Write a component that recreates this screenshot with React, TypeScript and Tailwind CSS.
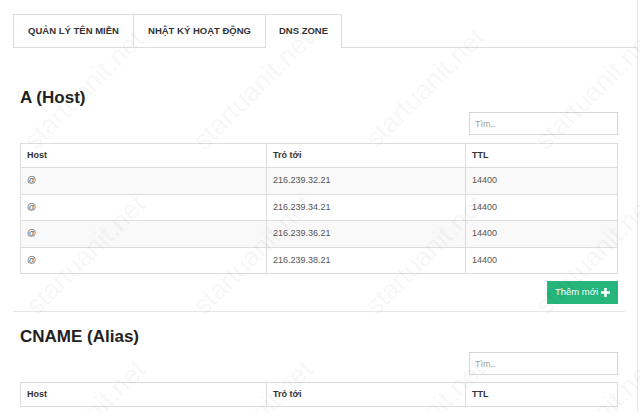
const tabs = [
  { label: 'QUẢN LÝ TÊN MIỀN', width: 'w-[120px]', active: false },
  { label: 'NHẬT KÝ HOẠT ĐỘNG', width: 'w-[132px]', active: false },
  { label: 'DNS ZONE', width: 'w-[77px]', active: true },
]

const aRecords = [
  { host: '@', target: '216.239.32.21', ttl: '14400' },
  { host: '@', target: '216.239.34.21', ttl: '14400' },
  { host: '@', target: '216.239.36.21', ttl: '14400' },
  { host: '@', target: '216.239.38.21', ttl: '14400' },
]

const marks = [
  [84, 90], [253, 90], [425, 88], [595, 90],
  [86, 255], [253, 255], [425, 255], [595, 255],
  [86, 420], [253, 420], [425, 420], [595, 420],
]

function SearchBox() {
  return (
    <div className="flex justify-end">
      <input
        placeholder="Tìm.."
        className="h-[23px] w-[149px] border border-[#d6d6d6] px-[5px] text-[9px] text-[#555] outline-none placeholder:text-[#a0a0a0]"
      />
    </div>
  )
}

function RecordTable({ rows }: { rows: typeof aRecords }) {
  return (
    <table className="w-full table-fixed border-collapse border border-[#ddd] text-[9px]">
      <colgroup>
        <col className="w-[246px]" />
        <col className="w-[199px]" />
        <col />
      </colgroup>
      <thead>
        <tr className="h-[24px]">
          <th className="border border-[#ddd] px-[6px] text-left font-bold text-[#333]">Host</th>
          <th className="border border-[#ddd] px-[6px] text-left font-bold text-[#333]">Trỏ tới</th>
          <th className="border border-[#ddd] px-[6px] text-left font-bold text-[#333]">TTL</th>
        </tr>
      </thead>
      <tbody>
        {rows.map((r, i) => (
          <tr key={i} className={i % 2 === 0 ? 'h-[26.5px] bg-[#f9f9f9]' : 'h-[26.5px] bg-white'}>
            <td className="border border-[#ddd] px-[6px] text-[#555]">{r.host}</td>
            <td className="border border-[#ddd] px-[6px] text-[#555]">{r.target}</td>
            <td className="border border-[#ddd] px-[6px] text-[#555]">{r.ttl}</td>
          </tr>
        ))}
      </tbody>
    </table>
  )
}

export default function App() {
  return (
    <div className="relative h-[412px] w-[640px] overflow-hidden bg-white font-['Liberation_Sans',Arial,sans-serif]">
      <div className="ml-[13px] h-full w-[625px] border-r border-[#e6e6e6] pt-[14px]">
        {/* tabs */}
        <ul className="flex border-b border-[#ddd]">
          {tabs.map((t) => (
            <li
              key={t.label}
              className={
                t.active
                  ? `-mb-px flex h-[34px] ${t.width} items-center justify-center border-x border-t border-[#ddd] bg-white text-[9.5px] font-bold text-[#333]`
                  : `flex h-[33px] ${t.width} items-center justify-center border-l border-t border-[#ddd] bg-white text-[9.5px] font-bold text-[#333]`
              }
            >
              {t.label}
            </li>
          ))}
        </ul>

        <div className="w-[612px]">
          <div className="px-[7px]">
            <h2 className="mt-[40px] h-[20px] text-[17px] font-bold leading-[20px] text-[#222]">A (Host)</h2>
            <div className="mt-[4px]">
              <SearchBox />
            </div>
            <div className="mt-[8px]">
              <RecordTable rows={aRecords} />
            </div>
            <div className="mt-[7px] flex justify-end">
              <button className="flex h-[23px] w-[71px] items-center justify-center gap-[3px] bg-[#26b57b] text-[9.5px] text-white">
                Thêm mới
                <svg width="9" height="9" viewBox="0 0 10 10" fill="white">
                  <path d="M3.6 0h2.8v3.6H10v2.8H6.4V10H3.6V6.4H0V3.6h3.6z" />
                </svg>
              </button>
            </div>
          </div>
          <hr className="mt-[7px] border-t border-[#e5e5e5]" />
          <div className="px-[7px]">
            <h2 className="mt-[15px] h-[20px] text-[17px] font-bold leading-[20px] text-[#222]">CNAME (Alias)</h2>
            <div className="mt-[5px]">
              <SearchBox />
            </div>
            <div className="mt-[7px]">
              <RecordTable rows={[]} />
            </div>
          </div>
        </div>
      </div>

      {/* watermark */}
      <div className="pointer-events-none absolute inset-0">
        {marks.map(([x, y], i) => (
          <span
            key={i}
            className="absolute -translate-x-1/2 -translate-y-1/2 -rotate-45 whitespace-nowrap text-[27px] text-black/[0.05]"
            style={{ left: x, top: y }}
          >
            startuanit.net
          </span>
        ))}
      </div>
    </div>
  )
}
